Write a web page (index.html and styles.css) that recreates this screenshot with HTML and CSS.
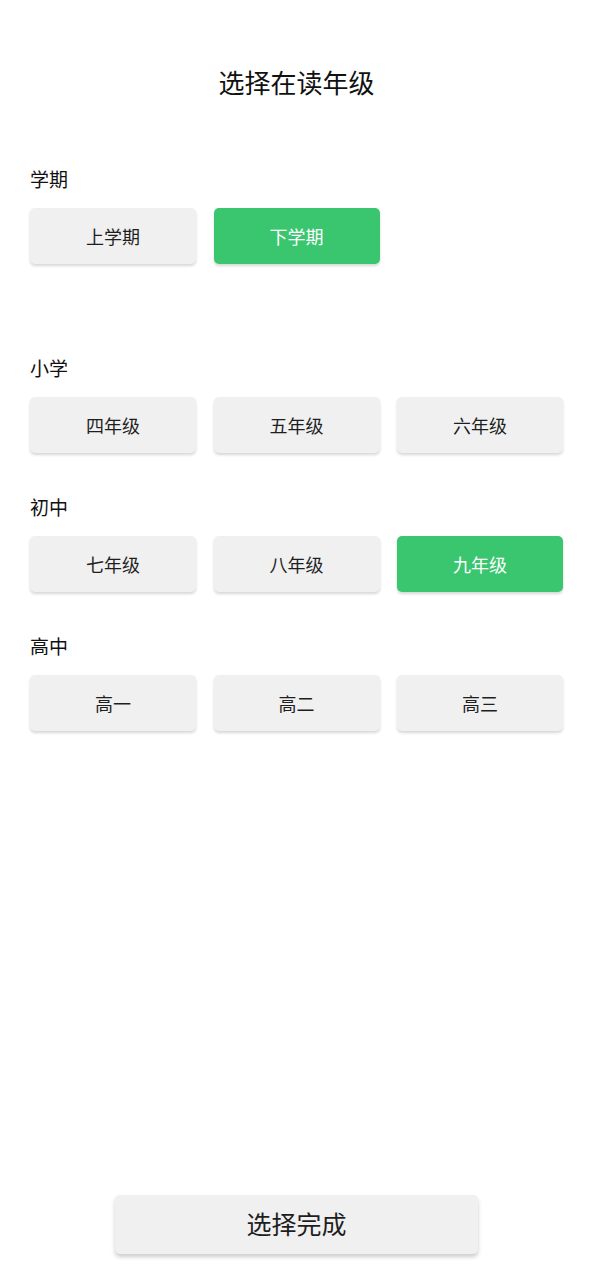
FILE: index.html
```html
<!DOCTYPE html>
<html lang="zh-CN">
<head>
<meta charset="utf-8">
<title>选择在读年级</title>
<link rel="stylesheet" href="styles.css">
</head>
<body>
<div class="page">
  <h1 class="title">选择在读年级</h1>

  <section class="group group-term">
    <div class="label">学期</div>
    <div class="grid">
      <div class="btn">上学期</div>
      <div class="btn active">下学期</div>
    </div>
  </section>

  <section class="group group-first">
    <div class="label">小学</div>
    <div class="grid">
      <div class="btn">四年级</div>
      <div class="btn">五年级</div>
      <div class="btn">六年级</div>
    </div>
  </section>

  <section class="group">
    <div class="label">初中</div>
    <div class="grid">
      <div class="btn">七年级</div>
      <div class="btn">八年级</div>
      <div class="btn active">九年级</div>
    </div>
  </section>

  <section class="group">
    <div class="label">高中</div>
    <div class="grid">
      <div class="btn">高一</div>
      <div class="btn">高二</div>
      <div class="btn">高三</div>
    </div>
  </section>

  <div class="footer">
    <div class="done">选择完成</div>
  </div>
</div>
</body>
</html>
```

FILE: styles.css
```css
* { box-sizing: border-box; }
html, body { margin: 0; padding: 0; background: #ffffff; }
body {
  font-family: "Noto Sans CJK SC", "Noto Sans", sans-serif;
  color: #1a1a1a;
}
.page {
  display: flex;
  flex-direction: column;
  height: 1280px;
  padding: 0 31px 0 30px;
}
.title {
  margin: 64px 0 0;
  font-size: 26px;
  line-height: 36px;
  font-weight: 400;
  text-align: center;
  color: #111;
}
.group { margin-top: 42px; }
.group-term { margin-top: 67px; }
.group-first { margin-top: 92px; }
.label {
  font-size: 19px;
  line-height: 24px;
  color: #111;
}
.grid {
  margin-top: 17px;
  display: grid;
  grid-template-columns: repeat(3, 1fr);
  column-gap: 17.5px;
}
.btn {
  height: 56px;
  border-radius: 5px;
  background: #f0f0f0;
  box-shadow: 0 2px 3px rgba(0,0,0,0.16);
  display: flex;
  align-items: center;
  justify-content: center;
  font-size: 18px;
  color: #1e1e1e;
}
.btn.active {
  background: #3ac66f;
  color: #ffffff;
}
.footer {
  margin-top: auto;
  padding-bottom: 26px;
  display: flex;
  justify-content: center;
}
.done {
  width: 363px;
  height: 59px;
  border-radius: 5px;
  background: #f0f0f0;
  box-shadow: 0 3px 4px rgba(0,0,0,0.2);
  display: flex;
  align-items: center;
  justify-content: center;
  padding-bottom: 3px;
  font-size: 25px;
  color: #1e1e1e;
}
```
